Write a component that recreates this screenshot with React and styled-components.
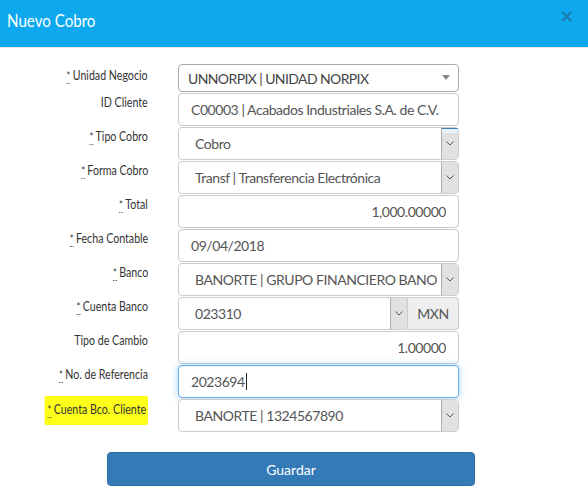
import React from 'react';
import styled, { createGlobalStyle, css } from 'styled-components';

const GlobalStyle = createGlobalStyle`
  html, body {
    margin: 0;
    padding: 0;
    background: #fff;
  }
  body {
    font-family: Lato, "Open Sans", sans-serif;
    color: #555;
  }
`;

const Modal = styled.div`
  width: 588px;
  height: 492px;
  background: #fff;
  overflow: hidden;
`;

const Header = styled.div`
  height: 48px;
  background: #0ea8ee;
  border-bottom: 1px solid #e5e5e5;
  display: flex;
  align-items: flex-start;
  justify-content: space-between;
  padding: 9px 14px 0 7px;
  box-sizing: border-box;
`;

const Title = styled.h4`
  margin: 0;
  font-size: 18px;
  font-weight: 400;
  color: #fff;
  line-height: 22px;
  font-family: Lato, sans-serif;
  transform: scaleX(0.84);
  transform-origin: left center;
`;

const Close = styled.button`
  border: 0;
  background: none;
  padding: 0;
  margin-top: 1px;
  color: #1f6f9c;
  opacity: 0.75;
  font-size: 17px;
  font-weight: 700;
  line-height: 12px;
  font-family: "DejaVu Sans", sans-serif;
`;

const Form = styled.form`
  display: grid;
  grid-template-columns: 140px 281px;
  column-gap: 30px;
  row-gap: 1px;
  padding: 16px 0 0 8px;
`;

const Label = styled.label`
  text-align: right;
  font-family: Lato, sans-serif;
  font-size: 14px;
  line-height: 16px;
  color: #333;
  padding-top: ${({ $top }) => $top ?? 1}px;
  white-space: nowrap;
`;

/* the labels use a narrow face; Lato is squeezed to the same width */
const Narrow = styled.span`
  display: inline-block;
  transform: scaleX(0.76);
  transform-origin: right center;
  ${({ $mark }) =>
    $mark &&
    css`
      background: #ffff1a;
      padding: 5px 2px 7px 4px;
      margin-top: -4px;
      border-radius: 2px;
    `}
`;

const Req = styled.abbr`
  text-decoration: none;
  border-bottom: 1px dotted #333;
  margin-right: 3px;
  font-size: 12px;
  cursor: help;
`;

const box = css`
  box-sizing: border-box;
  height: 33px;
  border: 1px solid #ccc;
  border-radius: 4px;
  background: #fff;
  font-family: Lato, "Open Sans", sans-serif;
  font-size: 14px;
  letter-spacing: -0.45px;
  color: #555;
`;

const TextInput = styled.input`
  ${box};
  width: 100%;
  padding: 0 12px;
  text-align: ${({ $right }) => ($right ? 'right' : 'left')};
  outline: none;
`;

const Focused = styled.div`
  ${box};
  border-color: #66afe9;
  box-shadow: inset 0 1px 1px rgba(0, 0, 0, 0.075), 0 0 7px rgba(102, 175, 233, 0.6);
  display: flex;
  align-items: center;
  padding: 0 12px;
`;

const Caret = styled.span`
  display: inline-block;
  width: 1px;
  height: 17px;
  background: #222;
  margin-left: 1px;
`;

const Select = styled.div`
  ${box};
  display: flex;
  align-items: stretch;
  padding: 0 0 0 16px;
  flex: 1;
  min-width: 0;
  ${({ $joined }) => $joined && css`border-radius: 4px 0 0 4px;`}
`;

const SelectText = styled.span`
  flex: 1;
  align-self: center;
  white-space: nowrap;
  overflow: hidden;
`;

const ArrowBox = styled.span`
  width: 16px;
  margin: 0 0 0 4px;
  background: #e1e1e1;
  border-left: 1px solid #adadad;
  display: flex;
  align-items: center;
  justify-content: center;
  ${({ $hot }) =>
    $hot &&
    css`
      background: linear-gradient(#3c7fb1 0 1px, #e5f1fb 1px 5px, #e1e1e1 5px);
    `}
`;

const Select2 = styled.div`
  box-sizing: border-box;
  height: 28px;
  border: 1px solid #aaa;
  border-radius: 4px;
  display: flex;
  align-items: center;
  justify-content: space-between;
  padding: 0 8px 0 9px;
  font-size: 14px;
  letter-spacing: -0.6px;
  color: #444;
`;

const Triangle = styled.span`
  width: 0;
  height: 0;
  border-left: 4px solid transparent;
  border-right: 4px solid transparent;
  border-top: 5px solid #888;
  margin-top: -2px;
`;

const Group = styled.div`
  display: flex;
`;

const Addon = styled.span`
  ${box};
  width: 51px;
  background: #eee;
  border-left: 0;
  border-radius: 0 4px 4px 0;
  display: flex;
  align-items: center;
  justify-content: center;
`;

const ButtonRow = styled.div`
  padding: 20px 0 0 107px;
`;

const Button = styled.button`
  width: 368px;
  height: 34px;
  background: #337ab7;
  border: 1px solid #2e6da4;
  border-radius: 4px;
  color: #fff;
  font-family: Lato, "Open Sans", sans-serif;
  font-size: 14px;
`;

const Chevron = () => (
  <svg width="8" height="5" viewBox="0 0 8 5">
    <polyline points="0.5,0.5 4,4 7.5,0.5" fill="none" stroke="#555" strokeWidth="1" />
  </svg>
);

const Star = () => <Req title="Requerido">*</Req>;

const Dropdown = ({ value, hot }) => (
  <Select>
    <SelectText>{value}</SelectText>
    <ArrowBox $hot={hot}>
      <Chevron />
    </ArrowBox>
  </Select>
);

const Field = ({ required, top, mark, children }) => (
  <Label $top={top}>
    <Narrow $mark={mark}>
      {required && <Star />}
      {children}
    </Narrow>
  </Label>
);

const App = () => (
  <Modal>
    <GlobalStyle />
    <Header>
      <Title>Nuevo Cobro</Title>
      <Close type="button">×</Close>
    </Header>

    <Form>
      <Field required top={3}>Unidad Negocio</Field>
      <Select2>
        UNNORPIX | UNIDAD NORPIX
        <Triangle />
      </Select2>

      <Field top={1}>ID Cliente</Field>
      <TextInput readOnly defaultValue="C00003 | Acabados Industriales S.A. de C.V." />

      <Field required>Tipo Cobro</Field>
      <Dropdown value="Cobro" hot />

      <Field required>Forma Cobro</Field>
      <Dropdown value="Transf | Transferencia Electrónica" />

      <Field required>Total</Field>
      <TextInput readOnly $right defaultValue="1,000.00000" />

      <Field required>Fecha Contable</Field>
      <TextInput readOnly defaultValue="09/04/2018" />

      <Field required>Banco</Field>
      <Dropdown value="BANORTE | GRUPO FINANCIERO BANORTE" />

      <Field required>Cuenta Banco</Field>
      <Group>
        <Select $joined>
          <SelectText>023310</SelectText>
          <ArrowBox>
            <Chevron />
          </ArrowBox>
        </Select>
        <Addon>MXN</Addon>
      </Group>

      <Field>Tipo de Cambio</Field>
      <TextInput readOnly $right defaultValue="1.00000" />

      <Field required>No. de Referencia</Field>
      <Focused>
        2023694
        <Caret />
      </Focused>

      <Field required mark>Cuenta Bco. Cliente</Field>
      <Dropdown value="BANORTE | 1324567890" />
    </Form>

    <ButtonRow>
      <Button type="button">Guardar</Button>
    </ButtonRow>
  </Modal>
);

export default App;
